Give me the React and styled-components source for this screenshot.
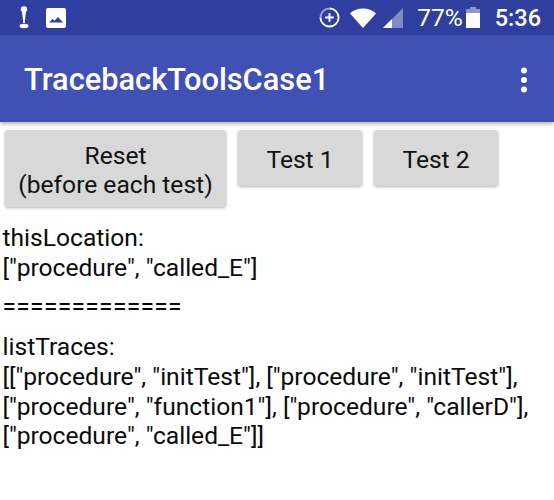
import React from "react";
import styled, { createGlobalStyle } from "styled-components";

const Global = createGlobalStyle`
  html, body { margin: 0; padding: 0; background: #fff; }
  body { font-family: Roboto, "Liberation Sans", sans-serif; overflow: hidden; }
`;
const Screen = styled.div`width: 554px; height: 500px; background: #fff; overflow: hidden;`;
const StatusBar = styled.div`
  height: 35px; background: #303f9f; color: #fff; display: flex; align-items: center;
  padding: 0 13px 0 19px; box-sizing: border-box;
`;
const StatusLeft = styled.div`display: flex; align-items: center; gap: 17px; flex: 1;`;
const StatusRight = styled.div`display: flex; align-items: center;`;
const Battery = styled.span`font-size: 24.5px; margin-left: 14px;`;
const Clock = styled.span`font-size: 23.5px; font-weight: 500; margin-left: 15px;`;
const AppBar = styled.div`
  height: 87px; background: #3f51b5; display: flex; align-items: center; justify-content: space-between;
  padding: 2px 26px 0 24px; box-sizing: border-box; box-shadow: 0 2px 4px rgba(0,0,0,.3); position: relative;
`;
const Title = styled.div`color: #fff; font-size: 30.8px; font-weight: 500;`;
const ButtonRow = styled.div`display: flex; align-items: flex-start; gap: 12px; padding: 8px 0 0 5px;`;
const Btn = styled.div`
  width: ${p => p.$w}px; height: ${p => p.$h}px; padding-top: 3px; box-sizing: border-box;
  background: #d7d8d7; border-radius: 3px;
  box-shadow: 0 1px 3px rgba(0,0,0,.3); color: #111; font-size: 24.6px; line-height: 29px;
  display: flex; align-items: center; justify-content: center; text-align: center;
`;
const Output = styled.div`
  padding: 0 0 0 2.500px; color: #0a0a0a; font-size: 24.6px; line-height: 29.7px;
`;
const Block = styled.div`margin-top: ${p => p.$t}px; white-space: pre;`;
const Rule = styled(Block)`letter-spacing: 0.3px;`;

export default function App() {
  return (
    <Screen>
      <Global />
      <StatusBar>
        <StatusLeft>
          <svg width="10" height="24" viewBox="0 0 10 24" fill="#fff">
            <path d="M1.800 3.500a3.200 3.200 0 0 1 6.400 0c0 1.200-.7 1.800-1.200 2.300L6 14v3H4v-3l-1-8.200c-.5-.5-1.200-1.100-1.200-2.300Z" />
            <ellipse cx="5" cy="20" rx="4.500" ry="2.200" />
          </svg>
          <svg width="20" height="20" viewBox="0 0 20 20">
            <rect width="20" height="20" rx="2" fill="#fff" />
            <path d="M3 14.500 6.500 11l2 1.800L12 9l5 5.500Z" fill="#303f9f" />
          </svg>
        </StatusLeft>
        <StatusRight>
          <svg width="21" height="21" viewBox="0 0 22 22" fill="none" stroke="#fff" strokeWidth="2">
            <path d="M11 1.500a9.500 9.500 0 1 1-9.500 9.500" />
            <path d="M1.500 11A9.500 9.500 0 0 1 11 1.500" strokeOpacity=".5" />
            <path d="M11 6.500v9M6.500 11h9" />
          </svg>
          <svg width="26" height="20" viewBox="0 0 26 20" fill="#fff" style={{ marginLeft: 10 }}>
            <path d="M0 5.500C3.500 2 8 .5 13 .5s9.500 1.500 13 5L13 20Z" />
          </svg>
          <svg width="20" height="20" viewBox="0 0 20 20" style={{ marginLeft: 7 }}>
            <path d="M0 20 20 0v20Z" fill="#fff" fillOpacity=".4" />
            <path d="M0 20 9 11v9Z" fill="#fff" />
          </svg>
          <Battery>77%</Battery>
          <svg width="14" height="21" viewBox="0 0 14 21" style={{ marginLeft: 3 }}>
            <path d="M4 0h6v2h4v4H0V2h4Z" fill="#fff" fillOpacity=".45" />
            <path d="M0 6h14v15H0Z" fill="#fff" />
          </svg>
          <Clock>5:36</Clock>
        </StatusRight>
      </StatusBar>
      <AppBar>
        <Title>TracebackToolsCase1</Title>
        <svg width="8" height="26" viewBox="0 0 8 26" fill="#fff">
          <circle cx="4" cy="3.500" r="3" />
          <circle cx="4" cy="13" r="3" />
          <circle cx="4" cy="22.500" r="3" />
        </svg>
      </AppBar>
      <ButtonRow>
        <Btn $w={221} $h={77}>Reset<br />(before each test)</Btn>
        <Btn $w={124} $h={56}>Test 1</Btn>
        <Btn $w={124} $h={56}>Test 2</Btn>
      </ButtonRow>
      <Output>
        <Block $t={16}>{"thisLocation:\n[\"procedure\", \"called_E\"]"}</Block>
        <Rule $t={10}>=============</Rule>
        <Block $t={10}>{"listTraces:\n[[\"procedure\", \"initTest\"], [\"procedure\", \"initTest\"],\n[\"procedure\", \"function1\"], [\"procedure\", \"callerD\"],\n[\"procedure\", \"called_E\"]]"}</Block>
      </Output>
    </Screen>
  );
}
